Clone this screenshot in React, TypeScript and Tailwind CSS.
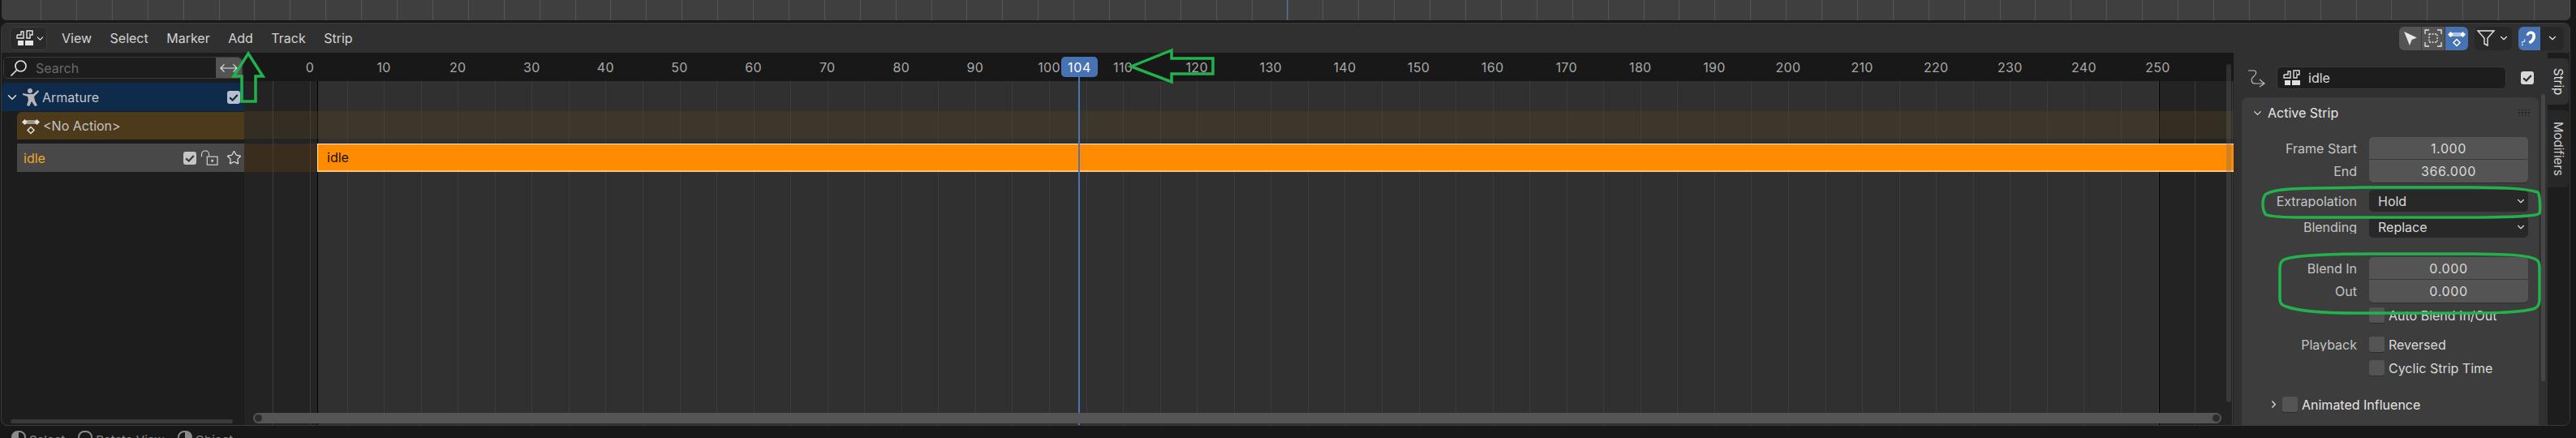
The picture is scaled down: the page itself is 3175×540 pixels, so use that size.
import React from 'react';
import { ChevronDown, ChevronRight, Star } from 'lucide-react';

const FONT = "font-['Inter','Noto_Sans',sans-serif]";
const FRAME0 = 382;
const PX_PER_FRAME = 9.11;
const TIMELINE_LEFT = 301;

const frameX = (frame: number) => FRAME0 + frame * PX_PER_FRAME - TIMELINE_LEFT;

const rulerFrames = Array.from({ length: 26 }, (_, i) => i * 10);
const gridFrames = Array.from({ length: 58 }, (_, i) => -5 + i * 5);
const topLines = Array.from({ length: 72 }, (_, i) => 50 + i * 43.9);

/* NLA 아이콘 */
const NlaIcon = ({ className = '' }: { className?: string }) => (
  <svg viewBox="0 0 24 24" className={className} fill="none" stroke="currentColor" strokeWidth="1.4">
    <path d="M2 8h5V4h3v8H5M2 8v4h3" />
    <path d="M14 3h7v5h-3v4h-4z" />
    <path d="M18 6h-1" />
    <rect x="3" y="15" width="7" height="6" fill="currentColor" stroke="none" />
    <rect x="12" y="15" width="10" height="6" fill="currentColor" stroke="none" />
  </svg>
);

/* 액션 아이콘 */
const ActionIcon = ({ className = '' }: { className?: string }) => (
  <svg viewBox="0 0 24 24" className={className}>
    <path d="M6 5h12l-1.5 2.5L18 10H6l1.500-2.500z" fill="currentColor" opacity="0.55" />
    <path d="M4.500 4 8 7.500 4.500 11 1 7.500zM19.500 4 23 7.500 19.500 11 16 7.500z" fill="currentColor" />
    <path d="M12 13.500 16 17.500 12 21.500 8 17.500z" fill="none" stroke="currentColor" strokeWidth="1.500" />
  </svg>
);

const Check = ({ box, tick }: { box: string; tick: string }) => (
  <span className={`w-[16px] h-[16px] rounded-[3px] flex items-center justify-center flex-shrink-0 ${box}`}>
    <svg viewBox="0 0 16 16" className="w-[14px] h-[14px]" fill="none" stroke={tick} strokeWidth="2.600">
      <path d="M2.500 8.500 6.500 12 13.500 4.500" />
    </svg>
  </span>
);

const EmptyCheck = () => (
  <span className="w-[19px] h-[19px] rounded-[3px] bg-[#545454] flex-shrink-0 shadow-[0_1px_0_#2c2c2c]" />
);

const Row = ({ label, children, className = '' }: { label?: string; children: React.ReactNode; className?: string }) => (
  <div className={`flex items-center ${className}`}>
    <span className="w-[142px] pr-[15px] text-right text-[#c4c4c4] truncate">{label}</span>
    <div className="w-[196px] flex items-center">{children}</div>
  </div>
);

const NumField = ({ value, pos }: { value: string; pos: 'top' | 'bottom' }) => (
  <div
    className={`w-full h-[28px] bg-[#545454] flex items-center justify-center text-[#d9d9d9] tracking-[0.04em]
      ${pos === 'top' ? 'rounded-t-[5px] border-b border-[#3a3a3a]' : 'rounded-b-[5px] shadow-[0_1px_0_#2c2c2c]'}`}
  >
    {value}
  </div>
);

const Dropdown = ({ value }: { value: string }) => (
  <div className="w-full h-[27px] bg-[#282828] rounded-[5px] flex items-center justify-between pl-[11px] pr-[2px] text-[#d9d9d9]">
    <span>{value}</span>
    <ChevronDown size={14} strokeWidth={2} />
  </div>
);

const Menu = () => (
  <nav className="flex items-center gap-[22.5px] ml-[18px] text-[#d2d2d2]">
    {['View', 'Select', 'Marker', 'Add', 'Track', 'Strip'].map((item) => (
      <span key={item}>{item}</span>
    ))}
  </nav>
);

const HeaderRight = () => (
  <div className="flex items-center">
    <div className="flex h-[29px] rounded-[6px] overflow-hidden">
      <div className="w-[28px] bg-[#545454] border-r border-[#3a3a3a] flex items-center justify-center">
        <svg viewBox="0 0 20 20" className="w-[21px] h-[21px] text-[#e6e6e6]">
          <path d="M3 2 18 9l-6 2.500L9.500 18z" fill="currentColor" />
        </svg>
      </div>
      <div className="w-[29px] bg-[#545454] border-r border-[#3a3a3a] flex items-center justify-center">
        <svg viewBox="0 0 24 24" className="w-[24px] h-[24px] text-[#e6e6e6]" fill="none" stroke="currentColor" strokeWidth="1.300">
          <path d="M2 7V2h5M17 2h5v5M22 17v5h-5M7 22H2v-5" />
          <rect x="7" y="7" width="10" height="10" strokeDasharray="2 1.500" />
        </svg>
      </div>
      <div className="w-[28px] bg-[#4772b3] flex items-center justify-center text-white">
        <ActionIcon className="w-[24px] h-[24px]" />
      </div>
    </div>
    <div className="ml-[8px] w-[46px] h-[29px] rounded-[6px] bg-[#282828] flex items-center pl-[2px] text-[#e6e6e6]">
      <svg viewBox="0 0 24 24" className="w-[24px] h-[24px]" fill="none" stroke="currentColor" strokeWidth="1.400">
        <path d="M2 3h20l-8 9v9l-4-2v-7z" />
      </svg>
      <ChevronDown size={14} strokeWidth={2} className="ml-[3px]" />
    </div>
    <div className="ml-[8px] w-[56px] h-[29px] rounded-[6px] bg-[#282828] overflow-hidden flex items-center text-[#e6e6e6]">
      <div className="w-[27px] h-full bg-[#4772b3] flex items-center justify-center">
        <svg viewBox="0 0 24 24" className="w-[23px] h-[23px]" fill="none" stroke="white">
          <path d="M8 8a6 6 0 0 1 12 1c0 4-3 8-7 10l-2-3c3-2 5-4 5-7a2.500 2.500 0 0 0-5-1z" fill="white" stroke="none" />
          <path d="M3 21v-5h3v-4" strokeWidth="1.300" strokeDasharray="2 1" />
        </svg>
      </div>
      <ChevronDown size={14} strokeWidth={2} className="ml-[8px]" />
    </div>
  </div>
);

const Channels = () => (
  <aside className="w-[299px] bg-[#1d1d1d] flex flex-col text-[#c4c4c4] relative flex-shrink-0 rounded-bl-[8px]">
    {/* 검색 */}
    <div className="h-[37px] flex items-center pl-[2px] pr-[2px]">
      <div className="flex-1 h-[27px] flex border border-[#3b3b3b] rounded-[6px] overflow-hidden">
        <div className="flex-1 bg-[#1d1d1d] flex items-center pl-[6px] text-[#6a6a6a]">
          <svg viewBox="0 0 24 24" className="w-[24px] h-[24px] text-[#e0e0e0] mr-[9px]" fill="none" stroke="currentColor" strokeWidth="1.700">
            <circle cx="14.500" cy="9.500" r="6.500" />
            <path d="M9.500 14.500 2.500 21.500" />
          </svg>
          <span>Search</span>
        </div>
        <div className="w-[32px] bg-[#545454] flex items-center justify-center text-[#e6e6e6]">
          <svg viewBox="0 0 24 14" className="w-[22px] h-[14px]" fill="none" stroke="currentColor" strokeWidth="1.300">
            <path d="M1 7h22M6 2 1 7l5 5M18 2l5 5-5 5" />
          </svg>
        </div>
      </div>
    </div>
    {/* Armature */}
    <div className="h-[35px] bg-[#0e2b4c] rounded-tl-[6px] flex items-center pl-[4px] pr-[5px]">
      <ChevronDown size={18} strokeWidth={2} className="text-[#e0e0e0]" />
      <svg viewBox="0 0 24 24" className="w-[24px] h-[24px] ml-[2px] mr-[2px] text-[#b5b5b5]" fill="currentColor">
        <circle cx="11" cy="4" r="3" />
        <path d="M2 7l6 1h7l6-5 1 2-6 6 1 5 3 6-3 1-4-6-3 6-3-1 2-7-1-4-6-2z" />
      </svg>
      <span className="flex-1">Armature</span>
      <Check box="bg-[#b6bfcc]" tick="#10294a" />
    </div>
    {/* No Action */}
    <div className="h-[34px] mt-[1px] ml-[19px] bg-[#4d3a1a] rounded-tl-[6px] flex items-center pl-[5px] text-[#c4c4c4]">
      <ActionIcon className="w-[24px] h-[24px] text-[#e0e0e0] mr-[3px]" />
      <span>&lt;No Action&gt;</span>
    </div>
    {/* idle */}
    <div className="h-[35px] mt-[5px] ml-[19px] bg-[#484848] flex items-center pl-[8px] pr-[3px]">
      <span className="flex-1 text-[#f0a52a]">idle</span>
      <Check box="bg-[#c6c6c6]" tick="#3a3a3a" />
      <svg viewBox="0 0 24 22" className="w-[23px] h-[20px] ml-[5px] text-[#c9c9c9]" fill="none" stroke="currentColor" strokeWidth="1.400">
        <path d="M1 9V6a5 5 0 0 1 10 0v2" />
        <rect x="8.500" y="9" width="14" height="11" />
        <rect x="14" y="13" width="3" height="3" fill="currentColor" stroke="none" />
      </svg>
      <Star size={19} strokeWidth={1.500} className="ml-[9px] text-[#e6e6e6]" />
    </div>
    {/* 가로 스크롤 */}
    <div className="absolute left-[11px] bottom-[2px] w-[274px] h-[5px] rounded-full bg-[#3a3a3a]" />
  </aside>
);

const Timeline = () => (
  <main className="relative flex-1 min-w-0 bg-[#303030] overflow-hidden flex flex-col text-[#a8a8a8]">
    {/* 프레임 범위 바깥 */}
    <div className="absolute left-0 top-0 bottom-0 w-[91px] bg-[#232323] border-r border-black" />
    <div className="absolute left-[2360px] right-0 top-0 bottom-0 bg-[#232323] border-l border-black" />
    {gridFrames.map((f) => (
      <div key={f} className="absolute top-0 bottom-0 w-px bg-[#3c3c3c]" style={{ left: frameX(f) }} />
    ))}

    {/* 눈금자 */}
    <div className="h-[35px] bg-[#181818] relative flex-shrink-0">
      {rulerFrames.map((f) => (
        <span key={f} className="absolute top-[10px] -translate-x-1/2 tracking-[0.02em]" style={{ left: frameX(f) }}>
          {f}
        </span>
      ))}
    </div>

    {/* 트랙 */}
    <div className="relative mt-[37px] h-[34px] bg-[#5c4420]/30" />
    <div className="relative mt-[6px] h-[35px] flex bg-[#5c3c14]/40">
      <div className="ml-[90px] flex-1 bg-[#ff8c00] border-t border-l border-[#ffe9c9] border-b-2 border-b-[#ffc27a] flex items-center pl-[11px] text-[#111]">
        idle
      </div>
    </div>

    {/* 현재 프레임 */}
    <div className="absolute left-[1028px] top-[30px] bottom-0 w-[2px] bg-[#4a74b4]" />
    <div className="absolute left-[1007px] top-[5px] w-[45px] h-[25px] rounded-[5px] bg-[#4772b3] flex items-center justify-center text-white tracking-[0.04em]">
      104
    </div>

    {/* 스크롤바 */}
    <div className="absolute left-[11px] w-[2426px] bottom-[2px] h-[13px] rounded-full bg-[#555555] flex items-center justify-between px-[2px]">
      <span className="w-[9px] h-[9px] rounded-full bg-[#2c2c2c]" />
      <span className="w-[9px] h-[9px] rounded-full bg-[#2c2c2c]" />
    </div>
    <div className="absolute right-[3px] top-[14px] h-[417px] w-[6px] rounded-full bg-[#6a6a6a]/30" />
  </main>
);

const Sidebar = () => (
  <aside className="w-[387px] bg-[#303030] flex flex-col relative flex-shrink-0 text-[#d9d9d9]">
    <div className="flex items-center h-[55px] pl-[17px] pt-[6px]">
      <svg viewBox="0 0 22 24" className="w-[22px] h-[24px] text-[#bdbdbd]" fill="none" stroke="currentColor" strokeWidth="1.200">
        <path d="M1 3h7c4 0 3 5 0 7-4 3-4 9 2 9h10M15 14l6 5-6 4" />
      </svg>
      <div className="ml-[14px] w-[283px] h-[28px] rounded-[6px] bg-[#1d1d1d] border border-[#3a3a3a] flex items-center pl-[6px]">
        <NlaIcon className="w-[24px] h-[24px] text-[#e0e0e0]" />
        <span className="ml-[8px]">idle</span>
      </div>
      <span className="ml-[18px]">
        <Check box="bg-[#d8d8d8]" tick="#2a2a2a" />
      </span>
    </div>

    <section className="ml-[10px] w-[366px] flex-1 bg-[#3d3d3d] rounded-t-[8px] overflow-hidden">
      <div className="flex items-center h-[38px] pl-[12px] text-[#e6e6e6]">
        <ChevronDown size={15} strokeWidth={1.800} className="mr-[5px]" />
        <span className="flex-1">Active Strip</span>
        <div className="grid grid-cols-4 gap-[2px] mr-[11px]">
          {Array.from({ length: 12 }).map((_, i) => (
            <span key={i} className="w-[2px] h-[1.500px] bg-[#202020]" />
          ))}
        </div>
      </div>
      <div className="mt-[11px] flex flex-col pl-[15px]">
        <Row label="Frame Start"><NumField value="1.000" pos="top" /></Row>
        <Row label="End"><NumField value="366.000" pos="bottom" /></Row>
        <Row label="Extrapolation" className="mt-[9px]"><Dropdown value="Hold" /></Row>
        <Row label="Blending" className="mt-[5px]"><Dropdown value="Replace" /></Row>
        <Row label="Blend In" className="mt-[24px]"><NumField value="0.000" pos="top" /></Row>
        <Row label="Out"><NumField value="0.000" pos="bottom" /></Row>
        <Row className="mt-[6px]">
          <EmptyCheck />
          <span className="ml-[5px] whitespace-nowrap">Auto Blend In/Out</span>
        </Row>
        <Row label="Playback" className="mt-[17px]">
          <EmptyCheck />
          <span className="ml-[5px]">Reversed</span>
        </Row>
        <Row label="" className="mt-[10px]">
          <EmptyCheck />
          <span className="ml-[5px] whitespace-nowrap">Cyclic Strip Time</span>
        </Row>
      </div>
      <div className="flex items-center mt-[26px] pl-[33px] text-[#e6e6e6]">
        <ChevronRight size={15} strokeWidth={1.800} className="-ml-[1px] mr-[3px]" />
        <EmptyCheck />
        <span className="ml-[5px]">Animated Influence</span>
      </div>
    </section>
    <div className="absolute right-[3px] top-[51px] h-[354px] w-[5px] rounded-full bg-[#555555]/60" />
  </aside>
);

const Tabs = () => (
  <div className="w-[27px] flex-shrink-0 bg-[#1d1d1d] flex flex-col items-start pt-[7px] text-[#d0d0d0]">
    <div className="w-[26px] h-[57px] bg-[#303030] rounded-r-[5px] flex items-center justify-center [writing-mode:vertical-rl] text-[15px] text-[#e0e0e0]">
      Strip
    </div>
    <div className="mt-[7px] w-[26px] h-[95px] bg-[#272727] rounded-r-[5px] flex items-center justify-center [writing-mode:vertical-rl] text-[15px]">
      Modifiers
    </div>
  </div>
);

/* 초록색 주석 표시 */
const Annotations = () => (
  <svg className="absolute inset-0 w-full h-full pointer-events-none" viewBox="0 0 3175 540" fill="none" stroke="#22b14c" strokeWidth="3.500">
    <path d="M306 66 288 94h10v31h17V94h9z" />
    <path d="M1394 82l50-20v10h51v19h-51v10z" />
    <path d="M2792 240c10-8 40-8 120-9h120c50 0 80 1 96 6 3 4 3 22 2 26-4 4-40 5-100 5h-190c-30 0-44-1-48-4-4-6-4-18 0-24z" />
    <path d="M2810 332c0-10 3-12 12-14 20-4 60-5 100-5h110c50 0 80 1 92 6 5 2 6 5 6 12v38c0 7-2 10-8 12-20 5-60 5-100 5h-120c-40 0-70-3-84-8-7-2-8-5-8-12z" />
  </svg>
);

export default function App() {
  return (
    <div className={`relative w-[3175px] h-[540px] overflow-hidden bg-[#181818] text-[16px] leading-none ${FONT}`}>
      {/* 위쪽 타임라인 */}
      <div className="relative ml-[2px] mr-[7px] h-[25px] bg-[#3f3f3f] rounded-b-[6px] overflow-hidden">
        {topLines.map((x) => (
          <div key={x} className="absolute top-0 bottom-0 w-px bg-[#555555]" style={{ left: x - 2 }} />
        ))}
        <div className="absolute top-0 bottom-0 left-[1584px] w-px bg-[#4a74b4]" />
      </div>

      <div className="mt-[3px] ml-[1px] mr-[7px] h-[497px] flex flex-col border border-[#3a3a3a] rounded-[8px] overflow-hidden bg-[#303030]">
        <header className="h-[36px] flex items-center justify-between pl-[10px] pr-[7px] flex-shrink-0">
          <div className="flex items-center">
            <div className="w-[46px] h-[29px] rounded-[6px] bg-[#2a2a2a] border border-[#3d3d3d] flex items-center pl-[6px] text-[#e6e6e6]">
              <NlaIcon className="w-[24px] h-[24px]" />
              <ChevronDown size={13} strokeWidth={2} />
            </div>
            <Menu />
          </div>
          <HeaderRight />
        </header>
        <div className="flex-1 flex min-h-0">
          <Channels />
          <Timeline />
          <Sidebar />
          <Tabs />
        </div>
      </div>

      {/* 상태 표시줄 */}
      <footer className="flex items-center gap-[4px] pl-[14px] pt-[6px] text-[15px] text-[#8a8a8a]">
        <span className="w-[18px] h-[22px] rounded-t-[8px] border-2 border-[#8a8a8a] bg-[linear-gradient(90deg,#8a8a8a_50%,transparent_50%)]" />
        <span>Select</span>
        <span className="ml-[12px] w-[18px] h-[22px] rounded-t-[8px] border-2 border-[#8a8a8a]" />
        <span>Rotate View</span>
        <span className="ml-[12px] w-[18px] h-[22px] rounded-t-[8px] border-2 border-[#8a8a8a] bg-[linear-gradient(270deg,#8a8a8a_50%,transparent_50%)]" />
        <span>Object</span>
      </footer>

      <Annotations />
    </div>
  );
}
